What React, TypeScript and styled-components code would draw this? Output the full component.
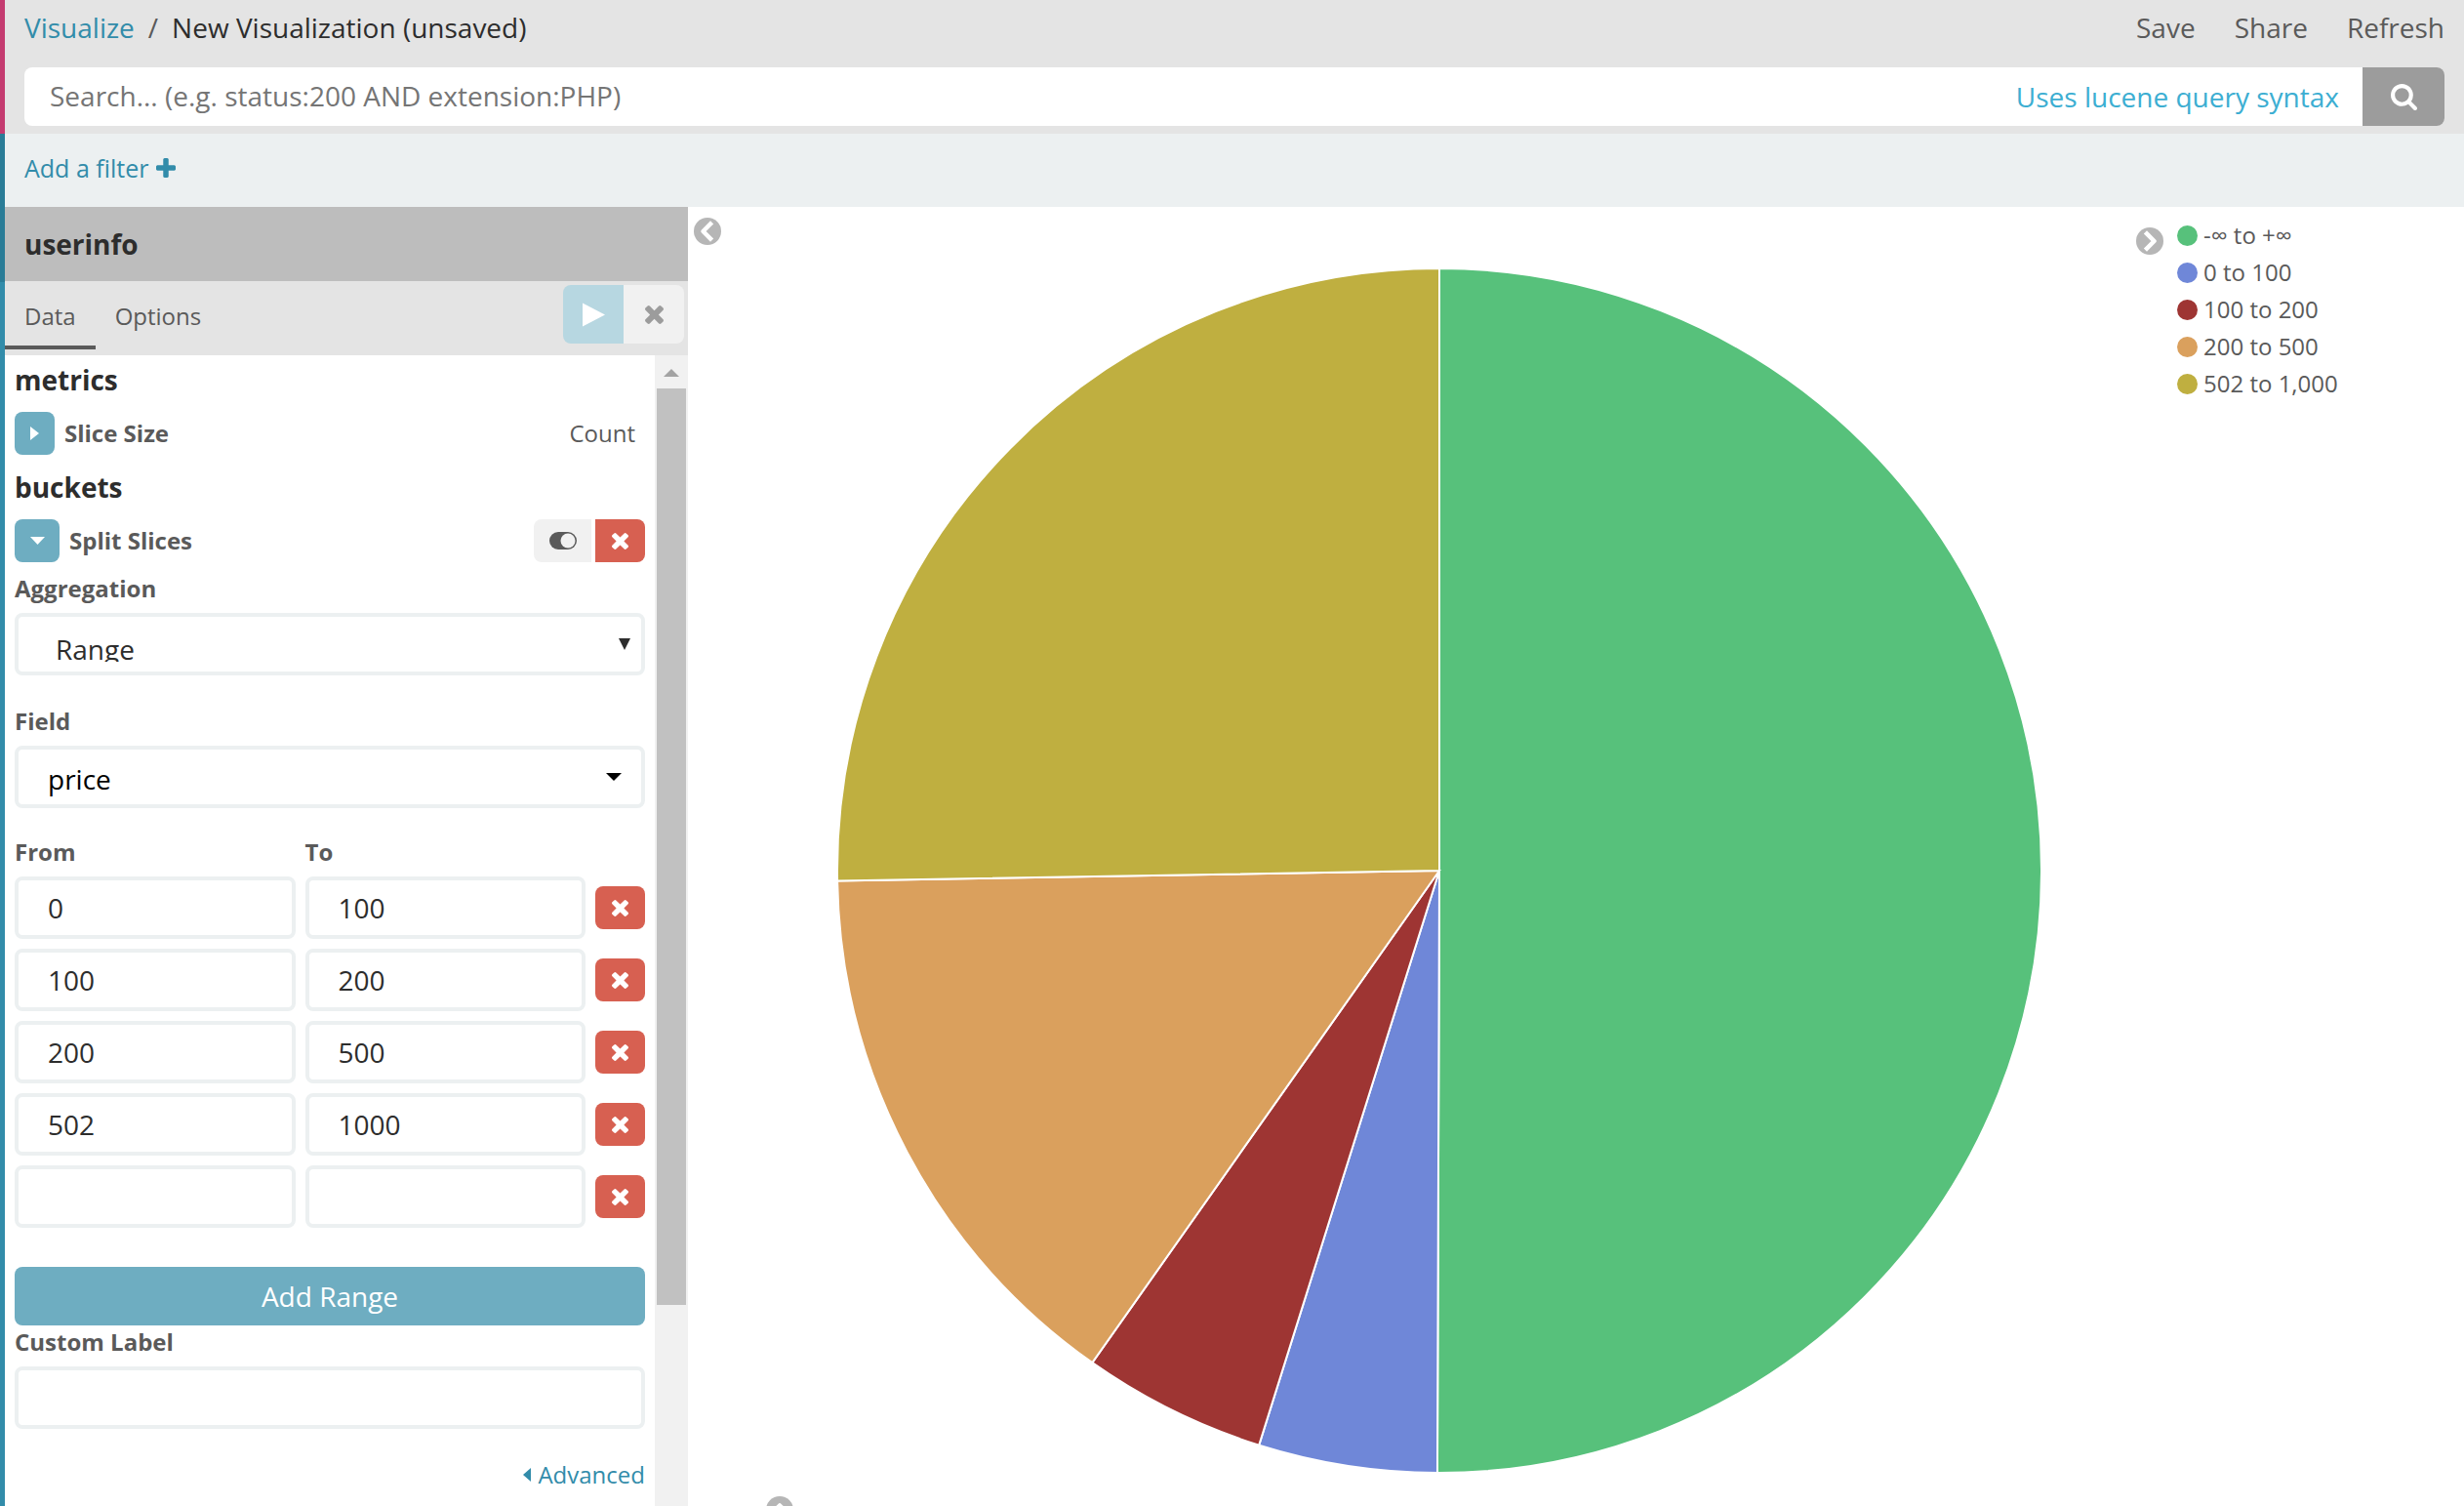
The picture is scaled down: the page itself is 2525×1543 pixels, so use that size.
import React from "react";
import styled, { createGlobalStyle, css } from "styled-components";

const GlobalStyle = createGlobalStyle`
  *, *::before, *::after { box-sizing: border-box; }
  body { margin: 0; background: #fff; }
  body, button, input, select {
    font-family: "Open Sans", "Noto Sans", Arial, sans-serif;
  }
  button { border: 0; margin: 0; padding: 0; cursor: pointer; }
  a { text-decoration: none; }
`;

const centered = css`
  display: flex;
  align-items: center;
  justify-content: center;
`;

const Page = styled.div`
  display: flex;
  height: 100vh;
  overflow: hidden;
  font-size: 24px;
  line-height: 34px;
  color: #5a5a5a;
`;

const NavStrip = styled.div`
  display: flex;
  flex-direction: column;
  flex: none;
  width: 5px;
  background: #328caa;
`;

const StripPart = styled.div<{ $height: number; $color: string }>`
  flex: none;
  height: ${(p) => p.$height}px;
  background: ${(p) => p.$color};
`;

const Content = styled.div`
  display: flex;
  flex-direction: column;
  flex: 1;
  min-width: 0;
`;

const Header = styled.header`
  flex: none;
  padding: 8px 20px;
  background: #e4e4e4;
`;

const HeaderRow = styled.div`
  display: flex;
  justify-content: space-between;
  height: 40px;
  margin-bottom: 21px;
  font-size: 28px;
  line-height: 40px;
`;

const Crumbs = styled.nav`
  display: flex;
  gap: 14px;
`;

const Crumb = styled.a`
  color: #328caa;
`;

const CurrentCrumb = styled.span`
  color: #2d2d2d;
`;

const Menu = styled.div`
  display: flex;
  gap: 40px;
`;

const MenuButton = styled.button`
  background: none;
  color: #5a5a5a;
  font-size: 28px;
  line-height: 40px;
`;

const SearchForm = styled.form`
  display: flex;
  height: 60px;
  border-radius: 8px;
  overflow: hidden;
  background: #fff;
`;

const SearchInput = styled.input`
  flex: 1;
  min-width: 0;
  padding: 0 26px 2px;
  border: 0;
  background: none;
  font-size: 28px;
  color: #2d2d2d;
  &::placeholder { color: #757575; opacity: 1; }
`;

const SyntaxLink = styled.a`
  padding-right: 24px;
  font-size: 28px;
  line-height: 60px;
  color: #3caed2;
`;

const SearchButton = styled.button`
  ${centered}
  width: 84px;
  background: #9c9c9c;
  color: #fff;
`;

const FilterBar = styled.div`
  display: flex;
  align-items: center;
  flex: none;
  height: 75px;
  padding: 0 20px 6px;
  background: #ecf0f1;
`;

const FilterLink = styled.a`
  display: flex;
  align-items: center;
  gap: 8px;
  font-size: 25px;
  color: #328caa;
`;

const Workspace = styled.div`
  display: flex;
  flex: 1;
  min-height: 0;
`;

const Sidebar = styled.aside`
  display: flex;
  flex-direction: column;
  flex: none;
  width: 700px;
`;

const IndexTitle = styled.h1`
  flex: none;
  height: 76px;
  margin: 0;
  padding-left: 20px;
  background: #bdbdbd;
  color: #2d2d2d;
  font-size: 28px;
  font-weight: 700;
  line-height: 76px;
`;

const TabBar = styled.div`
  display: flex;
  flex: none;
  height: 76px;
  padding: 4px 4px 6px 0;
  background: #e4e4e4;
`;

const Tab = styled.button<{ $active?: boolean }>`
  padding: 2px 20px 0;
  background: none;
  border-bottom: 4px solid ${(p) => (p.$active ? "#5a5a5a" : "transparent")};
  color: #5a5a5a;
  font-size: 24px;
  line-height: 60px;
`;

const TabActions = styled.div`
  display: flex;
  height: 60px;
  margin-left: auto;
  border-radius: 8px;
  overflow: hidden;
`;

const TabAction = styled.button<{ $primary?: boolean }>`
  ${centered}
  width: 62px;
  background: ${(p) => (p.$primary ? "#b7d7e1" : "#f1f1f1")};
  color: ${(p) => (p.$primary ? "#fff" : "#9c9c9c")};
`;

const SidebarBody = styled.div`
  display: flex;
  flex: 1;
  min-height: 0;
`;

const Editor = styled.div`
  flex: 1;
  min-width: 0;
  padding: 2px 10px;
  overflow: hidden;
`;

const Scrollbar = styled.div`
  display: flex;
  flex-direction: column;
  flex: none;
  width: 34px;
  padding: 0 2px;
  background: #f1f1f1;
`;

const ScrollArrow = styled.div`
  ${centered}
  height: 34px;
  padding-top: 2px;
`;

const ScrollThumb = styled.div`
  height: 939px;
  background: #c1c1c1;
`;

const SectionTitle = styled.h2`
  margin: 0;
  padding-top: 4px;
  color: #2d2d2d;
  font-size: 28px;
  font-weight: 700;
  line-height: 38px;
`;

const AggRow = styled.div`
  display: flex;
  align-items: center;
  gap: 10px;
  height: 44px;
  margin: 14px 0 10px;
`;

const AggName = styled.span`
  flex: 1;
  font-weight: 700;
`;

const AggSummary = styled.span`
  padding-right: 10px;
`;

const ExpandButton = styled.button<{ $open?: boolean }>`
  ${centered}
  width: ${(p) => (p.$open ? 46 : 41)}px;
  height: 44px;
  border-radius: 8px;
  background: #6eadc1;
  color: #fff;
`;

const ButtonPair = styled.div`
  display: flex;
  gap: 4px;
  border-radius: 8px;
  overflow: hidden;
`;

const ToggleButton = styled.button`
  ${centered}
  width: 59px;
  height: 44px;
  background: #f1f1f1;
  color: #5a5a5a;
`;

const RemoveButton = styled.button<{ $joined?: boolean }>`
  ${centered}
  flex: none;
  width: 51px;
  height: 44px;
  border-radius: ${(p) => (p.$joined ? 0 : 8)}px;
  background: #d76051;
  color: #fff;
`;

const Label = styled.label`
  display: block;
  margin-bottom: 8px;
  font-weight: 700;
`;

const Field = styled.div`
  margin-bottom: 30px;
`;

const boxed = css`
  display: block;
  width: 100%;
  height: 64px;
  border: 4px solid #ecf0f1;
  border-radius: 8px;
  background: #fff;
  color: #2d2d2d;
  font-size: 28px;
`;

const TextInput = styled.input`
  ${boxed}
  padding: 0 30px;
`;

const SelectWrap = styled.div`
  position: relative;
`;

const Select = styled.select<{ $strong?: boolean }>`
  ${boxed}
  appearance: none;
  padding: ${(p) => (p.$strong ? "8px 30px 4px" : "14px 38px 10px")};
  color: ${(p) => (p.$strong ? "#000" : "#2d2d2d")};
`;

const SelectArrow = styled.svg<{ $right: number }>`
  position: absolute;
  top: 26px;
  right: ${(p) => p.$right}px;
  pointer-events: none;
`;

const RangeGrid = styled.div`
  display: grid;
  grid-template-columns: 1fr 1fr 51px;
  gap: 10px;
  align-items: center;
  margin-bottom: 40px;
`;

const RangeHead = styled.label`
  font-weight: 700;
  line-height: 30px;
`;

const AddButton = styled.button`
  width: 100%;
  height: 60px;
  border-radius: 8px;
  background: #6eadc1;
  color: #fff;
  font-size: 28px;
`;

const AdvancedLink = styled.a`
  display: flex;
  align-items: center;
  justify-content: flex-end;
  gap: 7px;
  color: #328caa;
`;

const Stage = styled.main`
  display: flex;
  flex-direction: column;
  flex: 1;
  min-width: 0;
`;

const StageRow = styled.div`
  display: flex;
  flex: 1;
  min-height: 0;
`;

const CollapseColumn = styled.div`
  flex: none;
  width: 56px;
  padding: 11px 6px;
`;

const RoundButton = styled.button`
  display: block;
  width: 28px;
  height: 28px;
  border-radius: 50%;
  background: none;
`;

const Chart = styled.svg`
  flex: 1;
  min-width: 0;
  height: 100%;
  padding: 63px 0 24px;
`;

const LegendPanel = styled.div`
  display: flex;
  gap: 14px;
  flex: none;
  width: 336px;
  padding: 11px 0;
`;

const LegendToggle = styled.div`
  padding-top: 10px;
`;

const LegendList = styled.ul`
  margin: 0;
  padding: 0;
  list-style: none;
  line-height: 36px;
`;

const LegendItem = styled.li`
  display: flex;
  gap: 6px;
  height: 38px;
`;

const Dot = styled.span<{ $color: string }>`
  width: 21px;
  height: 21px;
  margin-top: 8px;
  border-radius: 50%;
  background: ${(p) => p.$color};
`;

const SpyBar = styled.div`
  flex: none;
  height: 10px;
  padding-left: 80px;
  overflow: hidden;
`;

const CrossIcon = ({ size = 17 }: { size?: number }) => (
  <svg width={size} height={size} viewBox="110 366 1188 1188" fill="currentColor" aria-hidden="true">
    <path d="M1298 1322q0 40-28 68l-136 136q-28 28-68 28t-68-28l-294-294-294 294q-28 28-68 28t-68-28l-136-136q-28-28-28-68t28-68l294-294-294-294q-28-28-28-68t28-68l136-136q28-28 68-28t68 28l294 294 294-294q28-28 68-28t68 28l136 136q28 28 28 68t-28 68l-294 294 294 294q28 28 28 68z" />
  </svg>
);

const SearchIcon = () => (
  <svg width="27" height="27" viewBox="0 128 1664 1664" fill="currentColor" aria-hidden="true">
    <path d="M1152 832q0-185-131.500-316.500t-316.500-131.500-316.500 131.500-131.500 316.500 131.500 316.500 316.500 131.500 316.500-131.500 131.500-316.500zM1664 1664q0 52-38 90t-90 38q-54 0-90-38l-343-342q-179 124-399 124-143 0-273.500-55.500t-225-150-150-225-55.500-273.500 55.500-273.500 150-225 225-150 273.500-55.500 273.500 55.500 225 150 150 225 55.500 273.500q0 220-124 399l343 343q37 37 37 90z" />
  </svg>
);

const PlusIcon = () => (
  <svg width="20" height="20" viewBox="0 192 1408 1408" fill="currentColor" aria-hidden="true">
    <path d="M1408 800v192q0 40-28 68t-68 28h-416v416q0 40-28 68t-68 28h-192q-40 0-68-28t-28-68v-416h-416q-40 0-68-28t-28-68v-192q0-40 28-68t68-28h416v-416q0-40 28-68t68-28h192q40 0 68 28t28 68v416h416q40 0 68 28t28 68z" />
  </svg>
);

const turns = { left: 0, up: 90, right: 180 };

const ChevronCircle = ({ to }: { to: keyof typeof turns }) => (
  <svg width="28" height="28" viewBox="0 0 28 28" aria-hidden="true">
    <g transform={`rotate(${turns[to]} 14 14)`}>
      <circle cx="14" cy="14" r="14" fill="#b6b6b6" />
      <path d="M17 6.500 9.500 14l7.500 7.500" fill="none" stroke="#fff" strokeWidth="4.500" strokeLinejoin="round" strokeLinecap="square" />
    </g>
  </svg>
);

const slices = [
  { name: "-∞ to +∞", color: "#57c17b", from: 0, to: 180.19 },
  { name: "0 to 100", color: "#6f87d8", from: 180.19, to: 197.43 },
  { name: "100 to 200", color: "#9e3533", from: 197.43, to: 215.2 },
  { name: "200 to 500", color: "#daa05d", from: 215.2, to: 269.02 },
  { name: "502 to 1,000", color: "#bfaf40", from: 269.02, to: 360 },
];

const RADIUS = 617;

function rim(angle: number) {
  const t = (angle * Math.PI) / 180;
  return `${RADIUS + RADIUS * Math.sin(t)} ${RADIUS - RADIUS * Math.cos(t)}`;
}

function slicePath(from: number, to: number) {
  const large = to - from > 180 ? 1 : 0;
  return `M${RADIUS} ${RADIUS}L${rim(from)}A${RADIUS} ${RADIUS} 0 ${large} 1 ${rim(to)}Z`;
}

const ranges = [
  ["0", "100"],
  ["100", "200"],
  ["200", "500"],
  ["502", "1000"],
  ["", ""],
];

export default function App() {
  return (
    <Page>
      <GlobalStyle />
      <NavStrip>
        <StripPart $height={137} $color="#c43b70" />
        <StripPart $height={152} $color="#2a7c97" />
      </NavStrip>
      <Content>
        <Header>
          <HeaderRow>
            <Crumbs aria-label="Breadcrumb">
              <Crumb href="#visualize">Visualize</Crumb>
              <span>/</span>
              <CurrentCrumb>New Visualization (unsaved)</CurrentCrumb>
            </Crumbs>
            <Menu>
              <MenuButton type="button">Save</MenuButton>
              <MenuButton type="button">Share</MenuButton>
              <MenuButton type="button">Refresh</MenuButton>
            </Menu>
          </HeaderRow>
          <SearchForm onSubmit={(e) => e.preventDefault()}>
            <SearchInput
              type="text"
              aria-label="Search"
              placeholder="Search... (e.g. status:200 AND extension:PHP)"
            />
            <SyntaxLink href="#syntax">Uses lucene query syntax</SyntaxLink>
            <SearchButton type="submit" aria-label="Search">
              <SearchIcon />
            </SearchButton>
          </SearchForm>
        </Header>
        <FilterBar>
          <FilterLink href="#filter">
            Add a filter
            <PlusIcon />
          </FilterLink>
        </FilterBar>
        <Workspace>
          <Sidebar>
            <IndexTitle>userinfo</IndexTitle>
            <TabBar>
              <Tab type="button" $active>Data</Tab>
              <Tab type="button">Options</Tab>
              <TabActions>
                <TabAction type="button" $primary aria-label="Apply changes">
                  <svg width="23" height="25" viewBox="0 0 23 25" fill="currentColor" aria-hidden="true">
                    <path d="M0 0.500 23 12.500 0 24.500z" />
                  </svg>
                </TabAction>
                <TabAction type="button" aria-label="Discard changes">
                  <CrossIcon size={19} />
                </TabAction>
              </TabActions>
            </TabBar>
            <SidebarBody>
              <Editor>
                <SectionTitle>metrics</SectionTitle>
                <AggRow>
                  <ExpandButton type="button" aria-label="Expand slice size">
                    <svg width="9" height="14" viewBox="0 0 9 14" fill="currentColor" aria-hidden="true">
                      <path d="M0 0 9 7 0 14z" />
                    </svg>
                  </ExpandButton>
                  <AggName>Slice Size</AggName>
                  <AggSummary>Count</AggSummary>
                </AggRow>
                <SectionTitle>buckets</SectionTitle>
                <AggRow>
                  <ExpandButton type="button" $open aria-label="Collapse split slices">
                    <svg width="15" height="8" viewBox="0 0 15 8" fill="currentColor" aria-hidden="true">
                      <path d="M0 0h15L7.500 8z" />
                    </svg>
                  </ExpandButton>
                  <AggName>Split Slices</AggName>
                  <ButtonPair>
                    <ToggleButton type="button" aria-label="Disable aggregation">
                      <svg width="28" height="18" viewBox="0 0 28 18" aria-hidden="true">
                        <rect width="28" height="18" rx="9" fill="currentColor" />
                        <circle cx="19" cy="9" r="7.500" fill="#f1f1f1" />
                      </svg>
                    </ToggleButton>
                    <RemoveButton type="button" $joined aria-label="Remove aggregation">
                      <CrossIcon />
                    </RemoveButton>
                  </ButtonPair>
                </AggRow>
                <Field>
                  <Label htmlFor="aggregation">Aggregation</Label>
                  <SelectWrap>
                    <Select id="aggregation" defaultValue="Range">
                      <option>Range</option>
                    </Select>
                    <SelectArrow $right={15} width="12" height="12" viewBox="0 0 12 12" fill="#2d2d2d" aria-hidden="true">
                      <path d="M0 0h12L6 12z" />
                    </SelectArrow>
                  </SelectWrap>
                </Field>
                <Field>
                  <Label htmlFor="field">Field</Label>
                  <SelectWrap>
                    <Select id="field" $strong defaultValue="price">
                      <option>price</option>
                    </Select>
                    <SelectArrow $right={24} width="16" height="12" viewBox="0 0 16 12" aria-hidden="true">
                      <path d="M0 2h16L8 10z" />
                    </SelectArrow>
                  </SelectWrap>
                </Field>
                <RangeGrid>
                  <RangeHead htmlFor="from-0">From</RangeHead>
                  <RangeHead htmlFor="to-0">To</RangeHead>
                  <span />
                  {ranges.map(([from, to], i) => (
                    <React.Fragment key={i}>
                      <TextInput id={`from-${i}`} aria-label={`From ${i + 1}`} defaultValue={from} />
                      <TextInput id={`to-${i}`} aria-label={`To ${i + 1}`} defaultValue={to} />
                      <RemoveButton type="button" aria-label={`Remove range ${i + 1}`}>
                        <CrossIcon />
                      </RemoveButton>
                    </React.Fragment>
                  ))}
                </RangeGrid>
                <AddButton type="button">Add Range</AddButton>
                <Field>
                  <Label htmlFor="custom-label">Custom Label</Label>
                  <TextInput id="custom-label" />
                </Field>
                <AdvancedLink href="#advanced">
                  <svg width="8" height="14" viewBox="0 0 8 14" fill="currentColor" aria-hidden="true">
                    <path d="M8 0v14L0 7z" />
                  </svg>
                  Advanced
                </AdvancedLink>
              </Editor>
              <Scrollbar>
                <ScrollArrow>
                  <svg width="16" height="8" viewBox="0 0 16 8" fill="#a3a3a3" aria-hidden="true">
                    <path d="M8 0 16 8H0z" />
                  </svg>
                </ScrollArrow>
                <ScrollThumb />
              </Scrollbar>
            </SidebarBody>
          </Sidebar>
          <Stage>
            <StageRow>
              <CollapseColumn>
                <RoundButton type="button" aria-label="Collapse sidebar">
                  <ChevronCircle to="left" />
                </RoundButton>
              </CollapseColumn>
              <Chart viewBox={`0 0 ${2 * RADIUS} ${2 * RADIUS}`} role="img" aria-label="Pie chart of price ranges">
                {slices.map((s) => (
                  <path key={s.name} d={slicePath(s.from, s.to)} fill={s.color} stroke="#fff" strokeWidth="2" />
                ))}
              </Chart>
              <LegendPanel>
                <LegendToggle>
                  <RoundButton type="button" aria-label="Hide legend">
                    <ChevronCircle to="right" />
                  </RoundButton>
                </LegendToggle>
                <LegendList>
                  {slices.map((s) => (
                    <LegendItem key={s.name}>
                      <Dot $color={s.color} />
                      {s.name}
                    </LegendItem>
                  ))}
                </LegendList>
              </LegendPanel>
            </StageRow>
            <SpyBar>
              <RoundButton type="button" aria-label="Show data table">
                <ChevronCircle to="up" />
              </RoundButton>
            </SpyBar>
          </Stage>
        </Workspace>
      </Content>
    </Page>
  );
}
